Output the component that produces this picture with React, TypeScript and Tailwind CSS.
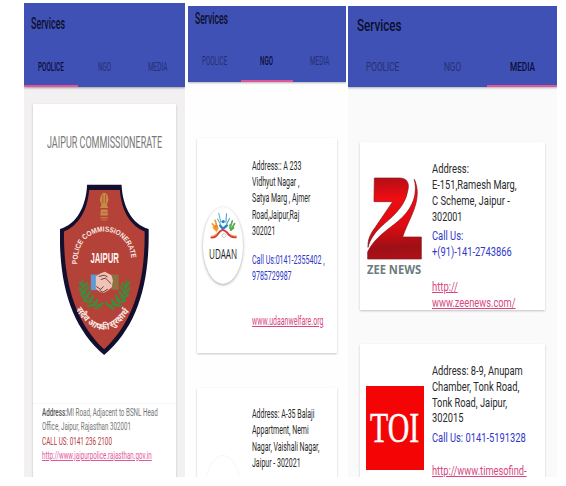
import { useLayoutEffect, useRef, useState } from "react";
import { clsx } from "clsx";

type LineProps = { text: string; width: number; className?: string; bold?: string };

/* A single line of condensed text, squeezed horizontally to the given width. */
function Line({ text, width, className, bold }: LineProps) {
  const ref = useRef<HTMLSpanElement>(null);
  const [scale, setScale] = useState(1);
  useLayoutEffect(() => {
    if (ref.current) setScale(width / ref.current.offsetWidth);
  }, [text, width]);
  return (
    <div className={clsx("flex whitespace-nowrap", className)} style={{ width }}>
      <span ref={ref} className="block shrink-0 origin-left" style={{ transform: `scaleX(${scale})` }}>
        {bold && <span className="font-medium text-[#555]">{bold}</span>}
        {text}
      </span>
    </div>
  );
}

function Lines({ items, className }: { items: [string, number][]; className?: string }) {
  return (
    <div className={className}>
      {items.map(([text, width]) => (
        <Line key={text} text={text} width={width} />
      ))}
    </div>
  );
}

function Tabs({ active, widths }: { active: number; widths: number[] }) {
  return (
    <div className="grid h-full grid-cols-3">
      {["POOLICE", "NGO", "MEDIA"].map((name, i) => (
        <div
          key={name}
          className={clsx(
            "flex items-center justify-center border-b-2 text-[12.5px]",
            i === active
              ? "border-[#e0559a] font-medium text-[#0c0e3a]"
              : "border-transparent text-[#26306f]",
          )}
        >
          <Line text={name} width={widths[i]} />
        </div>
      ))}
    </div>
  );
}

function Shield() {
  return (
    <svg className="h-[171px] w-[89px]" viewBox="136 58 266 514" preserveAspectRatio="none">
      <defs>
        <path id="arcTop" d="M188 299 C184 168 352 168 350 299" />
        <path id="arcBottom" d="M184 436 Q266 560 352 428" />
      </defs>
      <path
        d="M217 60 H320 C323 125 350 178 401 193 C404 360 366 488 268 572 C170 488 132 360 136 193 C187 178 214 125 217 60Z"
        fill="#13102f"
      />
      <path
        d="M223 76 H315 C319 137 346 183 389 201 C391 355 354 474 268 555 C182 474 146 355 148 201 C191 183 219 137 223 76Z"
        fill="#b44239"
      />
      <g fill="#c98a45">
        <path d="M259 91 Q268 78 278 91 L281 105 L276 120 L280 130 H256 L260 120 L255 105Z" />
        <path d="M258 135 H278 L279 153 H257Z" />
        <path d="M257 158 H279 V161 H257Z M260 165 H276 V167 H260Z" />
      </g>
      <path d="M264 90 V116 M272 90 V116 M262 144 H275" stroke="#97502f" strokeWidth="2" />
      <text fill="#f8e9e4" fontSize="22" fontWeight="700" fontFamily="Liberation Sans, sans-serif">
        <textPath href="#arcTop" textLength="268" lengthAdjust="spacingAndGlyphs">
          POLICE COMMISSIONERATE
        </textPath>
      </text>
      <text
        x="227"
        y="294"
        fill="#fff7f3"
        fontSize="42"
        fontWeight="700"
        textLength="85"
        lengthAdjust="spacingAndGlyphs"
        fontFamily="Liberation Sans, sans-serif"
      >
        JAIPUR
      </text>
      <path d="M228 330 H252 V377 H228Z" fill="#5b9bd0" />
      <path d="M290 330 H311 V376 H290Z" fill="#8e7141" />
      <path
        d="M243 336 L258 326 L270 322 L290 332 L294 348 L291 368 L279 378 L266 386 L254 382 L243 372Z"
        fill="#f0c3b6"
      />
      <path
        d="M252 336 L268 332 L278 337 M258 345 L272 341 L289 358 M244 366 L258 375 L266 366 M254 378 L264 383 L279 374"
        fill="none"
        stroke="#4a2525"
        strokeWidth="2.5"
      />
      <g fill="none" stroke="#3f8b3c">
        <path d="M203 345 Q202 405 258 424 M335 345 Q336 405 280 424" strokeWidth="4" />
        <path
          d="M194 352 L205 368 L218 356 M192 368 L206 386 L222 366 M196 388 L213 402 L226 380 M205 407 L225 414 L236 392 M218 425 L240 421 L248 404 M240 434 L256 424 L265 414 M344 352 L333 368 L320 356 M346 368 L332 386 L316 366 M342 388 L325 402 L312 380 M333 407 L313 414 L302 392 M320 425 L298 421 L290 404 M298 434 L282 424 L273 414"
          strokeWidth="7"
        />
      </g>
      <text fill="#f8e9e4" fontSize="27" fontWeight="700" fontFamily="Noto Sans, sans-serif">
        <textPath href="#arcBottom" textLength="204" lengthAdjust="spacingAndGlyphs">
          सदैव आपकी सुरक्षार्थ
        </textPath>
      </text>
    </svg>
  );
}

function UdaanMark() {
  return (
    <svg className="h-[27px] w-[27px]" viewBox="87 185 80 82" preserveAspectRatio="none">
      <g fill="none" strokeLinecap="round">
        <path d="M94 221 L108 239 M102 210 L110 236 M97 232 L106 242" stroke="#f39a2b" strokeWidth="5" />
        <path d="M113 189 L119 216 M109 206 L118 222" stroke="#52b5cf" strokeWidth="3" />
        <path d="M136 190 L134 216 M145 205 L136 222" stroke="#3c9cce" strokeWidth="3" />
        <path d="M117 226 L125 236 L137 226" stroke="#2687c4" strokeWidth="7" />
        <path d="M160 220 L148 240 M153 212 L146 234 M157 233 L149 240" stroke="#56a956" strokeWidth="5" />
      </g>
      <circle cx="105" cy="228" r="4" fill="#ef7f24" />
      <circle cx="126" cy="214" r="5" fill="#2687c4" />
      <circle cx="147" cy="226" r="4" fill="#6bb444" />
      <path
        d="M89 262 Q103 264 111 251 Q122 231 137 247 Q149 265 166 261"
        fill="none"
        stroke="#dd373a"
        strokeWidth="6"
      />
      <path d="M89 259 Q101 259 109 248 M146 253 Q154 259 166 258" fill="none" stroke="#f0a52b" strokeWidth="3" />
      <path d="M122 254 L129 250 L135 257 L130 262 L124 261Z" fill="none" stroke="#999" strokeWidth="1.5" />
    </svg>
  );
}

function ZeeMark() {
  return (
    <svg className="h-[83px] w-[55px]" viewBox="81 113 165 249" preserveAspectRatio="none">
      <defs>
        <linearGradient id="zee" gradientUnits="userSpaceOnUse" x1="150" y1="115" x2="165" y2="360">
          <stop offset="0" stopColor="#b20f16" />
          <stop offset="0.25" stopColor="#ee0d12" />
          <stop offset="0.6" stopColor="#dc0c12" />
          <stop offset="0.85" stopColor="#9d1016" />
          <stop offset="1" stopColor="#ad1118" />
        </linearGradient>
      </defs>
      <path
        d="M103 116 H178 C203 116 209 134 203 155 C195 205 150 238 123 262 C105 279 90 300 84 324 C83 300 91 284 105 265 L158 187 H102Z"
        fill="url(#zee)"
        stroke="#8a1218"
        strokeWidth="2"
      />
      <path
        d="M223 120 C251 182 205 239 188 293 H244 V359 H83 V338 C98 305 125 284 160 257 C203 225 237 182 223 120Z"
        fill="url(#zee)"
        stroke="#8a1218"
        strokeWidth="2"
      />
    </svg>
  );
}

const card = "bg-white shadow-[0_1px_2px_rgba(0,0,0,0.22)]";
const title = "h-[24px] text-[17px] leading-[24px] text-[#0c0e2a] font-medium";

function PolicePanel() {
  return (
    <section className="mt-[3px] flex h-[474px] w-[161px] flex-col overflow-hidden bg-[#f2f0f1]">
      <header className="flex h-[84px] shrink-0 flex-col bg-[#3f51b5] shadow-[0_1px_2px_rgba(0,0,0,0.35)]">
        <Line text="Services" width={34} className={clsx("ml-[7px] mt-[8px]", title)} />
        <div className="mt-[14px] h-[38px]">
          <Tabs active={0} widths={[26, 13, 19.5]} />
        </div>
      </header>
      <div className={clsx("ml-[9px] mt-[17px] h-[390px] w-[143px] shrink-0", card)}>
        <Line text="JAIPUR COMMISSIONERATE" width={115} className="ml-[14px] pt-[26px] text-[17px] leading-6 text-[#777]" />
        <div className="ml-[27px] mt-[30px] h-[171px]">
          <Shield />
        </div>
        <div className="mt-[48px] border-t border-[#f7f7f7] pl-[9px] pt-[1px] text-[11.5px] leading-[14.4px] text-[#777]">
          <Line bold="Address:" text="MI Road, Adjacent to BSNL Head" width={116} />
          <Line text="Office, Jaipur, Rajasthan 302001" width={89} />
          <Line text="CALL US: 0141 236 2100" width={70} className="text-[#b8383c]" />
          <Line text="http://www.jaipurpolice.rajasthan.gov.in" width={110} className="text-[#e4589a] underline" />
        </div>
      </div>
    </section>
  );
}

function NgoPanel() {
  return (
    <section className="mt-[6px] flex h-[471px] w-[158px] flex-col overflow-hidden bg-[#fefefe]">
      <header className="flex h-[76px] shrink-0 flex-col bg-[#3f51b5] shadow-[0_1px_2px_rgba(0,0,0,0.3)]">
        <Line text="Services" width={33} className={clsx("ml-[7px]", title)} />
        <div className="mt-[13px] h-[39px]">
          <Tabs active={1} widths={[25, 13, 19.5]} />
        </div>
      </header>
      <article className={clsx("ml-[9px] mt-[56px] flex h-[215px] w-[140px] shrink-0", card)}>
        <div className="ml-[6px] mt-[69px] flex h-[77px] w-[40px] shrink-0 flex-col items-center rounded-[50%] bg-white pt-[5px] shadow-[0_1px_3px_rgba(0,0,0,0.35)]">
          <UdaanMark />
          <Line text="UDAAN" width={28} className="mt-[1px] font-['Open_Sans',sans-serif] text-[15px] leading-[26px] text-[#222]" />
        </div>
        <div className="ml-[8.5px] pt-[20px] text-[13px] leading-[16.2px]">
          <Lines
            className="text-[#2a2a2a]"
            items={[
              ["Address:: A 233", 49.5],
              ["Vidhyut Nagar ,", 47.5],
              ["Satya Marg , Ajmer", 58.5],
              ["Road,Jaipur,Raj", 47.5],
              ["302021", 23.5],
            ]}
          />
          <Lines
            className="mt-[13px] text-[#3038c8]"
            items={[
              ["Call Us:0141-2355402 ,", 72.5],
              ["9785729987", 39.5],
            ]}
          />
          <Line text="www.udaanwelfare.org" width={71.5} className="mt-[29px] text-[#d8487f] underline" />
        </div>
      </article>
      <article className={clsx("ml-[9px] mt-[35px] flex h-[120px] w-[140px] shrink-0", card)}>
        <div className="ml-[7px] mt-[67px] h-[76px] w-[38px] shrink-0 rounded-[50%] border border-[#f6f6f6]" />
        <Lines
          className="ml-[9.5px] pt-[18px] text-[13px] leading-[16.3px] text-[#2a2a2a]"
          items={[
            ["Address: A-35 Balaji", 62.5],
            ["Appartment, Nemi", 56.5],
            ["Nagar, Vaishali Nagar,", 67.5],
            ["Jaipur - 302021", 48.5],
          ]}
        />
      </article>
    </section>
  );
}

function MediaPanel() {
  return (
    <section className="mt-[6px] flex h-[471px] w-[209px] flex-col overflow-hidden bg-[#fafafa]">
      <header className="flex h-[81px] shrink-0 flex-col bg-[#3f51b5] shadow-[0_1px_2px_rgba(0,0,0,0.3)]">
        <Line text="Services" width={44.5} className={clsx("ml-[9px] mt-[7px]", title)} />
        <div className="mt-[12px] h-[38px]">
          <Tabs active={2} widths={[33, 17, 25]} />
        </div>
      </header>
      <article className={clsx("ml-[12px] mt-[55px] flex h-[168px] w-[185px] shrink-0", card)}>
        <div className="ml-[7px] mt-[35px] w-[55px] shrink-0">
          <ZeeMark />
          <Line text="ZEE NEWS" width={54} className="font-['Open_Sans',sans-serif] text-[13px] font-bold leading-[18px] text-[#6c7b80]" />
        </div>
        <div className="ml-[10px] pt-[18.5px] text-[13px] leading-4">
          <Lines
            className="text-[#2a2a2a]"
            items={[
              ["Address:", 37],
              ["E-151,Ramesh Marg,", 85],
              ["C Scheme, Jaipur -", 77.5],
              ["302001", 30.5],
            ]}
          />
          <Lines
            className="mt-[3px] text-[#3038c8]"
            items={[
              ["Call Us:", 31],
              ["+(91)-141-2743866", 79.5],
            ]}
          />
          <Lines
            className="mt-[19px] text-[#d8487f] underline"
            items={[
              ["http://", 25.5],
              ["www.zeenews.com/", 83.5],
            ]}
          />
        </div>
      </article>
      <article className={clsx("ml-[12px] mt-[34px] flex h-[160px] w-[185px] shrink-0", card)}>
        <div className="ml-[5.5px] mt-[42px] flex h-[84px] w-[58px] shrink-0 items-center justify-center bg-[#f50406]">
          <Line
            text="TOI"
            width={49}
            className="font-['Liberation_Serif',serif] text-[42px] leading-[50px] text-white [-webkit-text-stroke:0.5px_white]"
          />
        </div>
        <div className="ml-[8.5px] pt-[19px] text-[13px] leading-[15.8px]">
          <Lines
            className="text-[#2a2a2a]"
            items={[
              ["Address: 8-9, Anupam", 91],
              ["Chamber, Tonk Road,", 87],
              ["Tonk Road, Jaipur,", 75],
              ["302015", 31.5],
            ]}
          />
          <Line text="Call Us: 0141-5191328" width={94} className="mt-[3.5px] text-[#3038c8]" />
          <Line text="http://www.timesofind-" width={95} className="mt-[18px] text-[#d8487f] underline" />
        </div>
      </article>
    </section>
  );
}

export default function App() {
  return (
    <main className="flex h-[486px] w-[566px] items-start overflow-hidden bg-white pl-6 font-[Roboto,sans-serif]">
      <PolicePanel />
      <div className="ml-[3px]">
        <NgoPanel />
      </div>
      <div className="ml-[2px]">
        <MediaPanel />
      </div>
    </main>
  );
}
